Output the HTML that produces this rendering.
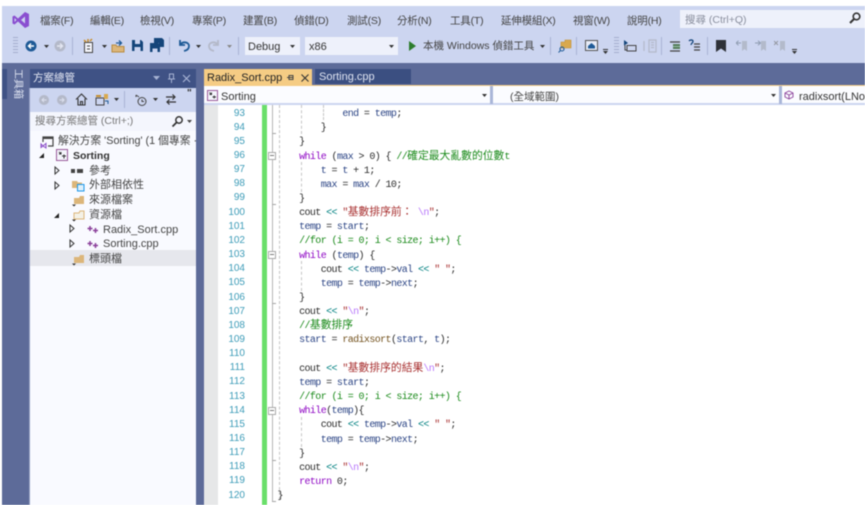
<!DOCTYPE html>
<html><head><meta charset="utf-8"><style>
html,body{margin:0;padding:0;background:#fff;}
#r{position:relative;width:865px;height:505px;overflow:hidden;background:#fff;font-family:"Liberation Sans","Noto Sans CJK TC",sans-serif;filter:blur(.4px);}
#r div,#r span.a,#r svg{position:absolute;}
.t{position:absolute;white-space:pre;line-height:14px;font-size:10.5px;color:#444;}
.m{top:14px;letter-spacing:-.2px;}
.tr{font-size:11px;color:#444;}
.l{position:absolute;left:218px;width:27px;text-align:right;font:10px/14px "Liberation Sans",sans-serif;color:#3d9cb8;height:14px;margin-top:.5px;}
.c{position:absolute;left:277.5px;margin-top:2px;white-space:pre;font:10px/14px "Liberation Mono",monospace;letter-spacing:-.6px;color:#2a2a2a;height:14px;}
.c b{font-weight:normal;font-size:10.8px;letter-spacing:0;line-height:0;font-family:"Noto Sans CJK TC",sans-serif;}
.k{color:#8f08c4}.v{color:#2c4585}.o{color:#008080}.s{color:#a83030}.e{color:#b776fb}.g{color:#1a8a1a}.f{color:#74531f}
.sep{width:1px;top:37px;height:18px;background:#a9b3d4;}
.box{left:268px;width:6px;height:6px;background:#fff;border:1px solid #a9a9a9;}
.min{left:270px;width:4px;height:1px;background:#777;}
.grip{width:5px;top:37px;height:18px;background:repeating-linear-gradient(#a4aecd 0 1px,#ccd5f0 1px 3px);}
</style></head><body><div id="r">
<div style="left:2px;top:6px;width:863px;height:57px;background:#ccd5f0"></div>
<div style="left:2px;top:63px;width:863px;height:442px;background:#5d6b99"></div>
<div style="left:2px;top:69px;width:5px;height:30px;background:#3f5285"></div>
<span class="t" style="left:11px;top:69px;font-size:10px;line-height:12px;color:#dfe4f2;writing-mode:vertical-rl;text-orientation:sideways">工具箱</span>

<svg style="left:12px;top:11px" width="18" height="18" viewBox="0 0 18 18"><path fill-rule="evenodd" d="M13 1L17 3V15L13 17L6 10.500L2.500 13.500L.5 12.500V5.500L2.500 4.500L6 7.500ZM13 5.500L9 9L13 12.500ZM2.500 7V11L4.500 9Z" fill="#8a4fd0"/></svg>

<span class="t m" style="left:40px">檔案(F)</span><span class="t m" style="left:90px">編輯(E)</span><span class="t m" style="left:140px">檢視(V)</span><span class="t m" style="left:192px">專案(P)</span><span class="t m" style="left:243px">建置(B)</span><span class="t m" style="left:294px">偵錯(D)</span><span class="t m" style="left:347px">測試(S)</span><span class="t m" style="left:397px">分析(N)</span><span class="t m" style="left:450px">工具(T)</span><span class="t m" style="left:501px">延伸模組(X)</span><span class="t m" style="left:573px">視窗(W)</span><span class="t m" style="left:627px">說明(H)</span>

<div style="left:680px;top:10px;width:185px;height:18px;background:#eef1fb"></div>
<span class="t" style="left:685px;top:13px;color:#8a8f9e">搜尋 (Ctrl+Q)</span>
<svg style="left:848px;top:11px" width="14" height="14" viewBox="0 0 14 14"><circle cx="8.500" cy="5.500" r="3.300" fill="none" stroke="#333" stroke-width="1.600"/><path d="M6 8 L2 12" stroke="#333" stroke-width="2"/></svg>

<!-- toolbar -->
<div class="grip" style="left:13px"></div>
<svg style="left:24px;top:39px" width="14" height="14" viewBox="0 0 14 14"><circle cx="7" cy="7" r="5.500" fill="#1e5a96"/><path d="M10 7H5M7 4.500L4.500 7L7 9.500" stroke="#fff" stroke-width="1.400" fill="none"/></svg>
<svg style="left:43px;top:44px" width="8" height="5"><path d="M1 1H6L3.500 4Z" fill="#333"/></svg>
<svg style="left:53px;top:39px" width="14" height="14" viewBox="0 0 14 14"><circle cx="7" cy="7" r="5.500" fill="#b4b9c9"/><path d="M4 7H9M7 4.500L9.500 7L7 9.500" stroke="#e4e7f2" stroke-width="1.400" fill="none"/></svg>
<div class="sep" style="left:72px"></div>
<svg style="left:81px;top:38px" width="16" height="16" viewBox="0 0 16 16"><rect x="3.500" y="4.500" width="8" height="10" fill="#f4f5fb" stroke="#444"/><path d="M5 4L3 2M7 4V1M9 3L11 1" stroke="#c98c26" stroke-width="1.500"/><path d="M6 8H9M6 11H9" stroke="#444"/></svg>
<svg style="left:101px;top:44px" width="8" height="5"><path d="M1 1H6L3.500 4Z" fill="#333"/></svg>
<svg style="left:111px;top:38px" width="14" height="16" viewBox="0 0 14 16"><path d="M1 7H5L6 8.500H13V14H1Z" fill="#dcb67a" stroke="#b98c40"/><path d="M5 5H10M8 2.500L10.500 5L8 7.500" stroke="#1e5a96" stroke-width="1.300" fill="none"/></svg>
<svg style="left:132px;top:40px" width="11" height="12" viewBox="0 0 11 12"><path d="M0 0H9L11 2V11H0Z" fill="#14457a"/><rect x="3" y="0" width="5" height="4" fill="#ccd5f0"/><rect x="2.500" y="7" width="6" height="4" fill="#ccd5f0"/></svg>
<svg style="left:150px;top:38px" width="14" height="14" viewBox="0 0 14 14"><path d="M4 0H12L14 2V9H9V5H4Z" fill="#14457a"/><path d="M0 5H8L10 6V14H0Z" fill="#14457a"/><rect x="2.500" y="10.500" width="5" height="3.500" fill="#ccd5f0"/></svg>
<div class="sep" style="left:169px"></div>
<svg style="left:177px;top:38px" width="14" height="15" viewBox="0 0 14 15"><path d="M3 2V7H8M3.500 6.500C6 3 12 4 12 8C12 11 9.500 12.500 7 13" fill="none" stroke="#1e5a96" stroke-width="1.800"/></svg>
<svg style="left:195px;top:44px" width="8" height="5"><path d="M1 1H6L3.500 4Z" fill="#333"/></svg>
<svg style="left:207px;top:38px" width="14" height="15" viewBox="0 0 14 15"><path d="M11 2V7H6M10.500 6.500C8 3 2 4 2 8C2 11 4.500 12.500 7 13" fill="none" stroke="#b4b9c9" stroke-width="1.800"/></svg>
<svg style="left:226px;top:44px" width="8" height="5"><path d="M1 1H6L3.500 4Z" fill="#888"/></svg>
<div class="sep" style="left:238px"></div>
<div style="left:245px;top:37px;width:55px;height:18px;background:#eef1fb"></div>
<span class="t" style="left:248px;top:40px;font-size:11px;color:#333">Debug</span>
<svg style="left:289px;top:44px" width="8" height="5"><path d="M1 1H6L3.500 4Z" fill="#333"/></svg>
<div style="left:305px;top:37px;width:93px;height:18px;background:#eef1fb"></div>
<span class="t" style="left:309px;top:40px;font-size:11px;color:#333">x86</span>
<svg style="left:388px;top:44px" width="8" height="5"><path d="M1 1H6L3.500 4Z" fill="#333"/></svg>
<svg style="left:408px;top:40px" width="9" height="12"><path d="M1 1L8 6L1 11Z" fill="#2d7d2d"/></svg>
<span class="t" style="left:423px;top:39px;font-size:10.500px;color:#444">本機 Windows 偵錯工具</span>
<svg style="left:539px;top:44px" width="8" height="5"><path d="M1 1H6L3.500 4Z" fill="#333"/></svg>
<div class="sep" style="left:550px"></div>
<svg style="left:558px;top:39px" width="14" height="14" viewBox="0 0 14 14"><path d="M3 3H7V1H13V9H3Z" fill="#d9a94e" stroke="#c08f30" stroke-width=".6"/><circle cx="4" cy="10" r="2" fill="none" stroke="#1e5a96" stroke-width="1.100"/><path d="M2.500 11.500L0.500 13.500" stroke="#1e5a96"/></svg>
<div class="sep" style="left:576px"></div>
<svg style="left:585px;top:39px" width="14" height="13" viewBox="0 0 14 13"><rect x=".5" y="1.500" width="12" height="10" fill="#e7ebf7" stroke="#555"/><path d="M3 7L6.500 4L10 7V9.500H3Z" fill="#1e5a96"/></svg>
<div style="left:603px;top:49px;width:5px;height:1px;background:#333"></div>
<svg style="left:603px;top:51px" width="6" height="4"><path d="M0 0H5L2.500 3Z" fill="#333"/></svg>
<div class="grip" style="left:614px"></div>
<svg style="left:623px;top:39px" width="14" height="14" viewBox="0 0 14 14"><rect x="4" y="6.500" width="9" height="5.500" fill="none" stroke="#444"/><path d="M1 1L5 4L1 6.500Z" fill="#14457a"/><path d="M2 6V11H4" stroke="#444" fill="none"/></svg>
<svg style="left:643px;top:39px" width="14" height="14" viewBox="0 0 14 14"><path d="M6 1H13V13H6ZM8 3.500H11M8 6H11M8 8.500H11M1 2V12" fill="none" stroke="#b4b9c9" stroke-width="1.200"/></svg>
<div class="sep" style="left:661px"></div>
<svg style="left:670px;top:40px" width="12" height="12" viewBox="0 0 12 12"><path d="M0 2H10M3 5H10M3 8H10M0 11H10" stroke="#444" stroke-width="1.200"/><rect x="3" y="4" width="7" height="5" fill="#3f8a3f" opacity=".5"/></svg>
<svg style="left:688px;top:39px" width="13" height="13" viewBox="0 0 13 13"><path d="M1 2C2 .500 5 .500 5 2.500C5 4 3 4 3 6" stroke="#14457a" stroke-width="1.300" fill="none"/><path d="M6 5H12M6 8H12M6 11H12" stroke="#444" stroke-width="1.200"/></svg>
<div class="sep" style="left:707px"></div>
<svg style="left:716px;top:40px" width="10" height="12"><path d="M0 0H10V12L5 8.500L0 12Z" fill="#2e3138"/></svg>
<svg style="left:736px;top:40px" width="12" height="11" viewBox="0 0 12 11" opacity=".65"><path d="M6 1H11V11L8.500 9L6 11Z" fill="#a6adb8"/><path d="M0 3H5M2.500 .800L0 3L2.500 5.200" stroke="#6f7f90" fill="none"/></svg>
<svg style="left:755px;top:40px" width="12" height="11" viewBox="0 0 12 11" opacity=".65"><path d="M6 1H11V11L8.500 9L6 11Z" fill="#a6adb8"/><path d="M0 3H5M3 .800L5.500 3L3 5.200" stroke="#6f7f90" fill="none"/></svg>
<svg style="left:774px;top:40px" width="12" height="11" viewBox="0 0 12 11" opacity=".65"><path d="M6 1H11V11L8.500 9L6 11Z" fill="#a6adb8"/><path d="M0 1L4 5M4 1L0 5" stroke="#777" fill="none"/></svg>
<div style="left:792px;top:49px;width:5px;height:1px;background:#333"></div>
<svg style="left:792px;top:51px" width="6" height="4"><path d="M0 0H5L2.500 3Z" fill="#333"/></svg>

<!-- solution explorer -->
<div style="left:30px;top:69px;width:166px;height:19px;background:#3f5285"></div>
<span class="t" style="left:33px;top:71px;color:#e6e9f5;font-size:10.500px">方案總管</span>
<svg style="left:153px;top:76px" width="8" height="5"><path d="M0 0H7L3.500 4Z" fill="#a6b2d3"/></svg>
<svg style="left:167px;top:73px" width="9" height="11" viewBox="0 0 9 11"><path d="M2.500 1H6.500V6H2.500ZM1 6H8M4.500 6V10" stroke="#a6b2d3" fill="none"/></svg>
<svg style="left:182px;top:74px" width="9" height="9"><path d="M1 1L8 8M8 1L1 8" stroke="#a6b2d3" stroke-width="1.200"/></svg>
<div style="left:29px;top:88px;width:1px;height:417px;background:#8e9abf"></div>
<div style="left:30px;top:88px;width:166px;height:25px;background:#ccd5f0"></div>
<div style="left:30px;top:131px;width:166px;height:374px;background:#f9faff"></div>
<div style="left:30px;top:112px;width:166px;height:19px;background:#f4f6fd"></div>
<svg style="left:38px;top:94px" width="12" height="12"><circle cx="6" cy="6" r="5" fill="#b4b9c9"/><path d="M8.500 6H4M6 4L4 6L6 8" stroke="#dde1ef" fill="none"/></svg>
<svg style="left:56px;top:94px" width="12" height="12"><circle cx="6" cy="6" r="5" fill="#b4b9c9"/><path d="M3.500 6H8M6 4L8 6L6 8" stroke="#dde1ef" fill="none"/></svg>
<svg style="left:75px;top:93px" width="13" height="13" viewBox="0 0 13 13"><path d="M1 6.500L6.500 1L12 6.500M3 5.500V12H10V5.500M5.500 12V8.500H7.500V12" stroke="#333" stroke-width="1.100" fill="none"/></svg>
<svg style="left:95px;top:93px" width="14" height="13" viewBox="0 0 14 13"><rect x="1" y="5" width="8" height="7" fill="none" stroke="#444"/><path d="M1 3H6" stroke="#c58e2e" stroke-width="2"/><path d="M9 1H13V6H9Z" fill="#d9a94e"/><path d="M10 8H13V11" stroke="#1e5a96" fill="none"/></svg>
<svg style="left:113px;top:98px" width="8" height="5"><path d="M1 0H6L3.500 3Z" fill="#333"/></svg>
<div style="left:124px;top:91px;width:1px;height:17px;background:#a9b3d4"></div>
<svg style="left:134px;top:93px" width="14" height="14" viewBox="0 0 14 14"><circle cx="8" cy="8.500" r="4" fill="none" stroke="#444"/><path d="M8 6.500V8.500H10M2 2L5 4M2 2V4" stroke="#444" fill="none"/></svg>
<svg style="left:152px;top:98px" width="8" height="5"><path d="M1 0H6L3.500 3Z" fill="#333"/></svg>
<svg style="left:165px;top:93px" width="12" height="13" viewBox="0 0 12 13"><path d="M1 4H10M7.500 1.500L10 4L7.500 6.500M11 9H2M4.500 6.500L2 9L4.500 11.500" stroke="#333" stroke-width="1.200" fill="none"/></svg>
<span class="t" style="left:187px;top:87px;font-size:10px;color:#333;font-weight:bold">"</span>
<span class="t" style="left:35px;top:114px;font-size:10.500px;color:#777">搜尋方案總管 (Ctrl+;)</span>
<svg style="left:171px;top:115px" width="13" height="13" viewBox="0 0 13 13"><circle cx="8" cy="5" r="3.200" fill="none" stroke="#333" stroke-width="1.500"/><path d="M5.500 7.500L1.500 11.500" stroke="#333" stroke-width="1.800"/></svg>
<svg style="left:187px;top:120px" width="6" height="4"><path d="M0 0H5L2.500 3Z" fill="#444"/></svg>

<svg style="left:40px;top:135px" width="14" height="14" viewBox="0 0 14 14"><path d="M3 7V2H13V11H8" fill="none" stroke="#444" stroke-width="1.200"/><path d="M3 2H13V4H3Z" fill="#444"/><path d="M1 9L3 11L6 8.500V13L3 11L1 12.500Z" fill="none" stroke="#8a4cc8"/></svg>
<span class="t tr" style="left:58px;top:134px;font-size:10.800px">解決方案 'Sorting' (1 個專案 ·</span>
<svg style="left:39px;top:153px" width="6" height="6"><path d="M5 0V5H0Z" fill="#222"/></svg>
<svg style="left:56px;top:149px" width="12" height="12" viewBox="0 0 12 12"><rect x=".5" y=".5" width="11" height="11" fill="#f4f5fb" stroke="#9a5a9a"/><path d="M3 3L5 5M5 3V5H3M6 7H10M8 5.500V9.500" stroke="#333" fill="none"/></svg>
<span class="t tr" style="left:73px;top:149px;font-weight:bold;color:#333;font-size:10.500px">Sorting</span>
<svg style="left:54px;top:166px" width="6" height="9"><path d="M1 1L5 4.500L1 8Z" fill="none" stroke="#333"/></svg>
<svg style="left:71px;top:167px" width="13" height="7"><path d="M0 2H4V6H0ZM6 2H12V6H6Z" fill="#444"/></svg>
<span class="t tr" style="left:89px;top:164px">參考</span>
<svg style="left:54px;top:181px" width="6" height="9"><path d="M1 1L5 4.500L1 8Z" fill="none" stroke="#333"/></svg>
<svg style="left:72px;top:179px" width="13" height="13" viewBox="0 0 13 13"><path d="M0 2H5L6 3.500H10V9H0Z" fill="#dcb67a"/><rect x="5.500" y="5.500" width="6.500" height="6.500" fill="#dff0fa" stroke="#1c97ea"/></svg>
<span class="t tr" style="left:89px;top:178px">外部相依性</span>
<svg style="left:72px;top:194px" width="13" height="13" viewBox="0 0 13 13"><path d="M2 4H7L8 2H12V10H2Z" fill="#dcb67a"/><path d="M0 10.500H4L2 12.500Z" fill="#333"/></svg>
<span class="t tr" style="left:89px;top:193px">來源檔案</span>
<svg style="left:54px;top:213px" width="6" height="6"><path d="M5 0V5H0Z" fill="#222"/></svg>
<svg style="left:72px;top:209px" width="13" height="13" viewBox="0 0 13 13"><path d="M2 4H7L8 2H12V10H2Z" fill="#f4f1e6" stroke="#dcb67a"/><path d="M0 10.500H4L2 12.500Z" fill="#333"/></svg>
<span class="t tr" style="left:89px;top:208px">資源檔</span>
<svg style="left:69px;top:224px" width="6" height="9"><path d="M1 1L5 4.500L1 8Z" fill="none" stroke="#333"/></svg>
<svg style="left:87px;top:225px" width="12" height="9" viewBox="0 0 12 9"><path d="M3 1V6M.5 3.500H5.500" stroke="#8a3f9a" stroke-width="1.500"/><path d="M8.500 3V8M6 5.500H11" stroke="#8a3f9a" stroke-width="1.500"/></svg>
<span class="t tr" style="left:103px;top:223px;font-size:11px">Radix_Sort.cpp</span>
<svg style="left:69px;top:239px" width="6" height="9"><path d="M1 1L5 4.500L1 8Z" fill="none" stroke="#333"/></svg>
<svg style="left:87px;top:240px" width="12" height="9" viewBox="0 0 12 9"><path d="M3 1V6M.5 3.500H5.500" stroke="#8a3f9a" stroke-width="1.500"/><path d="M8.500 3V8M6 5.500H11" stroke="#8a3f9a" stroke-width="1.500"/></svg>
<span class="t tr" style="left:103px;top:237px;font-size:11px">Sorting.cpp</span>
<div style="left:30px;top:250px;width:166px;height:16px;background:#e6e7ed"></div>
<svg style="left:72px;top:253px" width="13" height="13" viewBox="0 0 13 13"><path d="M2 4H7L8 2H12V10H2Z" fill="#dcb67a"/><path d="M0 10.500H4L2 12.500Z" fill="#333"/></svg>
<span class="t tr" style="left:89px;top:252px">標頭檔</span>

<!-- editor tabs -->
<div style="left:204px;top:69px;width:108px;height:17px;background:#f5cc84"></div>
<span class="t" style="left:207px;top:71px;font-size:11px;color:#222">Radix_Sort.cpp</span>
<svg style="left:286px;top:73px" width="9" height="9" viewBox="0 0 9 9"><path d="M1 4.500H3M3 2.500V6.500H7V2.500ZM3 4.500H7" stroke="#444" fill="none"/></svg>
<svg style="left:301px;top:74px" width="8" height="8"><path d="M.5.500L7.500 7.500M7.500.500L.5 7.500" stroke="#333" stroke-width="1.100"/></svg>
<div style="left:315px;top:69px;width:96px;height:15px;background:#3b4f81"></div>
<span class="t" style="left:319px;top:70px;font-size:11px;color:#dfe4f2">Sorting.cpp</span>
<div style="left:204px;top:85px;width:661px;height:1px;background:#f5cc84"></div>
<div style="left:204px;top:86px;width:661px;height:18px;background:#fbfcff"></div>
<div style="left:204px;top:103px;width:661px;height:2px;background:#ccd5f0"></div>
<div style="left:490px;top:86px;width:3px;height:18px;background:#a9b6d8"></div>
<div style="left:779px;top:86px;width:3px;height:18px;background:#a9b6d8"></div>
<svg style="left:207px;top:90px" width="11" height="11" viewBox="0 0 11 11"><rect x=".5" y=".5" width="10" height="10" fill="#f4f5fb" stroke="#9a5a9a"/><path d="M2.500 2.500L4.500 4.500M4.500 2.500V4.500H2.500M5.500 7H9M7.200 5.500V8.500" stroke="#333" fill="none"/></svg>
<span class="t" style="left:221px;top:90px;font-size:11px;color:#333">Sorting</span>
<svg style="left:482px;top:94px" width="6" height="4"><path d="M0 0H5L2.500 3Z" fill="#333"/></svg>
<span class="t" style="left:510px;top:90px;font-size:10.500px;color:#444">(全域範圍)</span>
<svg style="left:771px;top:94px" width="6" height="4"><path d="M0 0H5L2.500 3Z" fill="#333"/></svg>
<svg style="left:784px;top:90px" width="10" height="10" viewBox="0 0 10 10"><path d="M5 1L9 3V7L5 9L1 7V3ZM1 3L5 5L9 3M5 5V9" fill="none" stroke="#8a3f9a" stroke-width=".9"/></svg>
<span class="t" style="left:799px;top:90px;font-size:11px;color:#333">radixsort(LNode</span>

<!-- editor -->
<div style="left:204px;top:105px;width:661px;height:400px;background:#fff"></div>
<div style="left:204px;top:105px;width:14px;height:400px;background:#e6e7e8"></div>
<div style="left:262px;top:105px;width:4.500px;height:400px;background:#6adf6a"></div>
<div style="left:272px;top:105px;width:1px;height:397px;background:#b5b5b5"></div>
<div style="left:272px;top:501px;width:4px;height:1px;background:#a5a5a5"></div>
<div style="left:272px;top:133px;width:4px;height:1px;background:#a5a5a5"></div>
<div style="left:272px;top:204px;width:4px;height:1px;background:#a5a5a5"></div>
<div style="left:272px;top:303px;width:4px;height:1px;background:#a5a5a5"></div>
<div style="left:272px;top:460px;width:4px;height:1px;background:#a5a5a5"></div>
<div class="box" style="top:152px"></div><div class="min" style="top:155px"></div>
<div class="box" style="top:251px"></div><div class="min" style="top:254px"></div>
<div class="box" style="top:407px"></div><div class="min" style="top:410px"></div>
<div style="left:279px;top:105px;width:0;height:395px;border-left:1px dashed #c4c4c4"></div>
<div style="left:301px;top:105px;width:0;height:29px;border-left:1px dashed #c4c4c4"></div>
<div style="left:323px;top:105px;width:0;height:15px;border-left:1px dashed #c4c4c4"></div>
<div style="left:301px;top:162px;width:0;height:30px;border-left:1px dashed #c4c4c4"></div>
<div style="left:301px;top:261px;width:0;height:30px;border-left:1px dashed #c4c4c4"></div>
<div style="left:301px;top:417px;width:0;height:30px;border-left:1px dashed #c4c4c4"></div>

<span class="l" style="top:106px">93</span><span class="l" style="top:120.200px">94</span><span class="l" style="top:134.300px">95</span><span class="l" style="top:148.500px">96</span><span class="l" style="top:162.600px">97</span><span class="l" style="top:176.800px">98</span><span class="l" style="top:190.900px">99</span><span class="l" style="top:205px">100</span><span class="l" style="top:219.200px">101</span><span class="l" style="top:233.400px">102</span><span class="l" style="top:247.500px">103</span><span class="l" style="top:261.700px">104</span><span class="l" style="top:275.800px">105</span><span class="l" style="top:290px">106</span><span class="l" style="top:304.100px">107</span><span class="l" style="top:318.300px">108</span><span class="l" style="top:332.400px">109</span><span class="l" style="top:346.600px">110</span><span class="l" style="top:360.700px">111</span><span class="l" style="top:374.900px">112</span><span class="l" style="top:389px">113</span><span class="l" style="top:403.200px">114</span><span class="l" style="top:417.300px">115</span><span class="l" style="top:431.500px">116</span><span class="l" style="top:445.600px">117</span><span class="l" style="top:459.800px">118</span><span class="l" style="top:473.900px">119</span><span class="l" style="top:488px">120</span>

<span class="c" style="top:106px">            <span class="v">end</span> = <span class="v">temp</span>;</span>
<span class="c" style="top:120.200px">        }</span>
<span class="c" style="top:134.300px">    }</span>
<span class="c" style="top:148.500px">    <span class="k">while</span> (<span class="v">max</span> &gt; 0) { <span class="g">//<b>確定最大亂數的位數</b>t</span></span>
<span class="c" style="top:162.600px">        <span class="v">t</span> = <span class="v">t</span> + 1;</span>
<span class="c" style="top:176.800px">        <span class="v">max</span> = <span class="v">max</span> / 10;</span>
<span class="c" style="top:190.900px">    }</span>
<span class="c" style="top:205px">    cout <span class="o">&lt;&lt;</span> <span class="s">"<b>基數排序前：</b> </span><span class="e">\n</span><span class="s">"</span>;</span>
<span class="c" style="top:219.200px">    <span class="v">temp</span> = <span class="v">start</span>;</span>
<span class="c g" style="top:233.400px">    //for (i = 0; i &lt; size; i++) {</span>
<span class="c" style="top:247.500px">    <span class="k">while</span> (<span class="v">temp</span>) {</span>
<span class="c" style="top:261.700px">        cout <span class="o">&lt;&lt;</span> <span class="v">temp</span>-&gt;<span class="v">val</span> <span class="o">&lt;&lt;</span> <span class="s">" "</span>;</span>
<span class="c" style="top:275.800px">        <span class="v">temp</span> = <span class="v">temp</span>-&gt;<span class="v">next</span>;</span>
<span class="c" style="top:290px">    }</span>
<span class="c" style="top:304.100px">    cout <span class="o">&lt;&lt;</span> <span class="s">"</span><span class="e">\n</span><span class="s">"</span>;</span>
<span class="c g" style="top:318.300px">    //<b>基數排序</b></span>
<span class="c" style="top:332.400px">    <span class="v">start</span> = <span class="f">radixsort</span>(<span class="v">start</span>, <span class="v">t</span>);</span>
<span class="c" style="top:360.700px">    cout <span class="o">&lt;&lt;</span> <span class="s">"<b>基數排序的結果</b></span><span class="e">\n</span><span class="s">"</span>;</span>
<span class="c" style="top:374.900px">    <span class="v">temp</span> = <span class="v">start</span>;</span>
<span class="c g" style="top:389px">    //for (i = 0; i &lt; size; i++) {</span>
<span class="c" style="top:403.200px">    <span class="k">while</span>(<span class="v">temp</span>){</span>
<span class="c" style="top:417.300px">        cout <span class="o">&lt;&lt;</span> <span class="v">temp</span>-&gt;<span class="v">val</span> <span class="o">&lt;&lt;</span> <span class="s">" "</span>;</span>
<span class="c" style="top:431.500px">        <span class="v">temp</span> = <span class="v">temp</span>-&gt;<span class="v">next</span>;</span>
<span class="c" style="top:445.600px">    }</span>
<span class="c" style="top:459.800px">    cout <span class="o">&lt;&lt;</span> <span class="s">"</span><span class="e">\n</span><span class="s">"</span>;</span>
<span class="c" style="top:473.900px">    <span class="k">return</span> 0;</span>
<span class="c" style="top:488px">}</span>
</div></body></html>
